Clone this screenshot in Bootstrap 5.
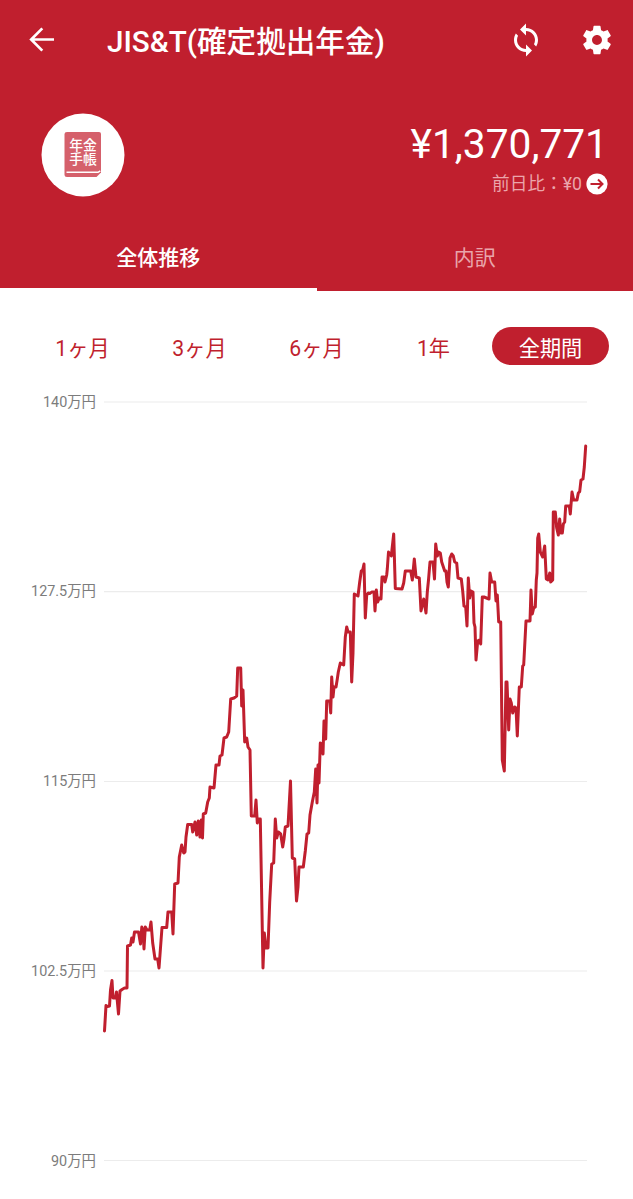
<!DOCTYPE html>
<html lang="ja">
<head>
<meta charset="utf-8">
<meta name="viewport" content="width=device-width, initial-scale=1">
<title>JIS&amp;T(確定拠出年金)</title>
<link href="https://cdn.jsdelivr.net/npm/bootstrap@5.3.0/dist/css/bootstrap.min.css" rel="stylesheet">
<style>
  :root { --brand: #c01f2e; }
  body { font-family: Roboto, "Noto Sans CJK JP", sans-serif; background: #fff; color: var(--brand); overflow: hidden; }
  .app-head { background: var(--brand); height: 291px; }
  .top-bar { height: 80px; padding: 0 19px 0 26px; }
  .top-bar h1 { font-size: 29.6px; font-weight: 500; line-height: 40px; margin: 4px 0 0 49px; white-space: nowrap; }
  .sync-icon { margin-right: 36px; }
  .summary { height: 147px; padding: 33px 25px 0 41px; }
  .avatar { width: 84px; height: 84px; }
  .amount { font-size: 40.7px; line-height: 48px; margin: 7px 0 0; }
  .diff { font-size: 17.7px; line-height: 24px; color: #eba5ab; margin-top: 4px; }
  .tab-row { height: 64px; }
  .tab-row .nav-link { height: 64px; padding: 16px 0 0; font-size: 21px; line-height: 30px; color: #e9a5ab; border-radius: 0; }
  .tab-row .nav-link.active { color: #fff; font-weight: 500; border-bottom: 3px solid #fff; }
  .ranges { padding: 36px 24px 0; }
  .ranges .btn { width: 117px; height: 38px; padding: 2px 0 0; font-size: 21.2px; line-height: 40px; color: var(--brand); border: 0; }
  .ranges .btn.active { background: var(--brand); color: #fff; }
  .chart { display: block; }
  .chart text { font-size: 14.4px; fill: #7c7c7c; text-anchor: end; }
</style>
</head>
<body>
<header class="app-head text-white">
  <div class="top-bar d-flex align-items-center">
    <svg width="32" height="32" viewBox="0 0 32 32" fill="none" stroke="#fff" stroke-width="2.7" aria-label="戻る"><path d="M28 15.5H6M16.3 4.400 5.200 15.500l11.100 11.100"/></svg>
    <h1>JIS&amp;T(確定拠出年金)</h1>
    <div class="d-flex ms-auto align-items-center">
      <svg class="sync-icon" width="36" height="36" viewBox="0 0 24 24" fill="#fff" aria-label="更新"><path d="M12 4V1L8 5l4 4V6c3.31 0 6 2.69 6 6 0 1.01-.25 1.97-.7 2.8l1.46 1.46C19.54 15.03 20 13.57 20 12c0-4.42-3.58-8-8-8zm0 14c-3.31 0-6-2.69-6-6 0-1.01.25-1.97.7-2.8L5.24 7.74C4.46 8.97 4 10.43 4 12c0 4.42 3.58 8 8 8v3l4-4-4-4v3z"/></svg>
      <svg width="34" height="34" viewBox="0 0 24 24" fill="#fff" aria-label="設定"><path d="M19.43 12.98c.04-.32.07-.64.07-.98s-.03-.66-.07-.98l2.11-1.65c.19-.15.24-.42.12-.64l-2-3.46c-.12-.22-.39-.3-.61-.22l-2.49 1c-.52-.4-1.08-.73-1.69-.98l-.38-2.65C14.46 2.18 14.25 2 14 2h-4c-.25 0-.46.18-.49.42l-.38 2.65c-.61.25-1.17.59-1.69.98l-2.49-1c-.23-.09-.49 0-.61.22l-2 3.46c-.13.22-.07.49.12.64l2.11 1.65c-.04.32-.07.65-.07.98s.03.66.07.98l-2.11 1.65c-.19.15-.24.42-.12.64l2 3.46c.12.22.39.3.61.22l2.49-1c.52.4 1.08.73 1.69.98l.38 2.65c.03.24.24.42.49.42h4c.25 0 .46-.18.49-.42l.38-2.65c.61-.25 1.17-.59 1.69-.98l2.49 1c.23.09.49 0 .61-.22l2-3.46c.12-.22.07-.49-.12-.64l-2.11-1.65zM12 15.5c-1.93 0-3.5-1.57-3.5-3.5s1.57-3.5 3.5-3.5 3.5 1.57 3.5 3.5-1.57 3.5-3.5 3.5z"/></svg>
    </div>
  </div>
  <div class="summary d-flex justify-content-between">
    <svg class="avatar" viewBox="0 0 84 84">
      <circle cx="42" cy="42" r="41.5" fill="#fff"/>
      <path d="M26 19h32q2 0 2 2v38.500l-4.500 4.500H26q-2.500 0-2.500-2.500V21q0-2 2.500-2z" fill="#d5606b"/>
      <path d="M25.500 59.300H57l2.300-1.500" fill="none" stroke="#fff" stroke-width="1.600"/>
      <g fill="#fff" font-size="13.800" font-weight="500" text-anchor="middle"><text x="42" y="37.200">年金</text><text x="42" y="51.200">手帳</text></g>
    </svg>
    <div class="text-end">
      <div class="amount">¥1,370,771</div>
      <div class="diff d-flex justify-content-end align-items-center"><span>前日比：¥0</span>
        <svg class="ms-1" width="22" height="22" viewBox="0 0 22 22"><circle cx="11" cy="11" r="10.600" fill="#fff"/><path d="M4.500 11h12M12 6.500l4.500 4.500-4.500 4.500" fill="none" stroke="#c01f2e" stroke-width="2"/></svg>
      </div>
    </div>
  </div>
  <nav class="tab-row nav nav-fill flex-nowrap">
    <a class="nav-link active w-50" href="#">全体推移</a>
    <a class="nav-link w-50" href="#">内訳</a>
  </nav>
</header>
<main>
  <div class="ranges d-flex">
    <button class="btn rounded-pill">1ヶ月</button>
    <button class="btn rounded-pill">3ヶ月</button>
    <button class="btn rounded-pill">6ヶ月</button>
    <button class="btn rounded-pill">1年</button>
    <button class="btn rounded-pill active">全期間</button>
  </div>
  <svg class="chart" width="633" height="834" viewBox="0 365 633 834">
    <path d="M104 402H587M104 591.700H587M104 781.500H587M104 971H587M104 1160.500H587" stroke="#ececec" stroke-width="1.200"/>
    <text x="96" y="406.500">140万円</text>
    <text x="96" y="596.200">127.5万円</text>
    <text x="96" y="786">115万円</text>
    <text x="96" y="975.700">102.5万円</text>
    <text x="96" y="1165.500">90万円</text>
    <polyline fill="none" stroke="#c01f2e" stroke-width="3" stroke-linejoin="round" stroke-linecap="round" points="
      104.500,1031 106,1005.500 107.500,1006.500 109.500,1006 110.500,990 112,980.500 113,998 115.500,998 116.500,992 118.500,1014 120,991 122,989.500 124.500,988 127,988 127.500,946 130.500,945 131.700,938 133,942 134.500,932 138.500,932 140.500,944 141.800,927 143,930 144,949 145.300,927 147,930 149.700,930 151,922 152.700,943 155,959 157.700,959 159,968 162,927.500 166.700,927.500 168,912 171.700,912 173,934 174.700,884
      178,883 179.300,857 181.700,845 183.700,853 185,852 186,837 187.700,824.500 191.700,824.500 192.700,832 195,822 196.700,835 198.300,821 200,837 201.300,820 202.500,838 203.300,814 205.700,813 207.700,802 209.300,798 210,787 214,788 216,765 219,765 220,756 222,755 224,738 226.700,737 228.700,732 230.700,699 234,698 236.700,696 237.700,668 240.700,668 241.700,706 243,690 244.700,742 246.700,738 248,747 250,750 251.300,816 254.700,816 256,800 257.300,823 258,819 260.300,819 263,968 264.300,933 266,948 268,948 269.700,902 271.700,864 273.700,863 275.300,819 276.700,838 278.300,832 280.700,834 282.700,847 284,839 285.300,827 288,826 290.500,781 292.300,858 294.700,859 296.500,901 298,887 299,867 303.300,867 305.300,851 307,834 308.700,833
      310,815 312.300,802 314.300,792 315.700,769 317,803 318,765 319,783 320.300,743 322,744 323,754 324,721 325.700,739 326.700,701 329.700,701 330.700,713 331.700,677 333,697 334,687 336,687 337.300,679 338.300,672 340.300,663 343.700,665 345.300,637 346.700,627 348,632 350.300,632 351.700,682 353,653 354.300,594 358,596 359.700,582 361.300,571 362.700,570 364,564 365.300,618 366.700,595 368.300,593 370,593.500 371.700,592 374,592 375,611 376.300,590 377.700,602 379.300,598 381,599 382,577 384,577 385,582 386.700,575 387.300,569 388.500,552 391.300,556 393.700,534 395.300,588.500 402,589 403.700,583 405.300,571 410.700,571 412.300,580 414.300,559 416,577 419.300,578 421,611 423.700,599 426,613
      427.300,592 428.500,580 430,562 433,562 434.500,579 435.700,544 437.300,556 438.500,552 440.300,553 441.700,562 444.700,571 446,571 447,582 448.300,587 450,558 451.700,554 453.300,556 454.700,562 456.700,563 458,578 461.300,579 462.700,591 464,606 465.700,607 467,626 468.300,578 469.700,598 471,591 473,592 474,623 475,627 476,660 477.700,641 479.300,640 480.700,644 482.300,597 484,597 489,599 490,573 491.700,582 494.700,582 496,601 497.300,595 498.700,622 500.700,622 502.300,760 504.300,771 506,682 507,682 508.700,730 510,699 511.300,703 512.700,713 514.700,707 516,708 517.300,736 519.300,687 521.300,687 522.700,666 523.700,665 526,621
      530,621 531,590 532.300,614 533.700,608 535.300,607 536.300,580 537,573 537.700,538 538.700,534 540.300,552 542.700,557 544.700,546 546.300,579 548,580 549.700,573 550.700,582 552.700,580 553.300,512 555.300,512 556.700,528 558.300,535 559.700,519 560.700,533 562.300,533 563.300,524 564.700,522 565.700,506 569.300,506 570.300,514 572,492 573.700,500 577,500 578.300,493 579.700,491.700 581,480 583,479 584.300,467 585.700,446"/>
  </svg>
</main>
<script src="https://cdn.jsdelivr.net/npm/bootstrap@5.3.0/dist/js/bootstrap.bundle.min.js"></script>
</body>
</html>
